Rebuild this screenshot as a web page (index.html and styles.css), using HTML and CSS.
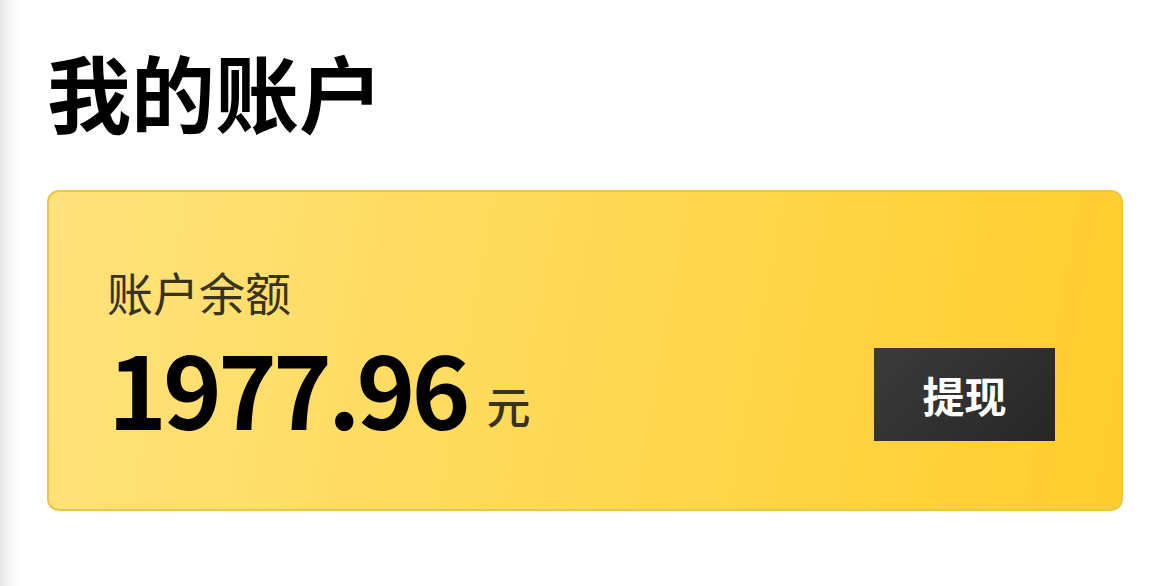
FILE: index.html
```html
<!DOCTYPE html>
<html lang="zh-CN">
<head>
<meta charset="utf-8">
<link rel="stylesheet" href="styles.css">
</head>
<body>
<main class="page">
  <h1 class="title">我的账户</h1>
  <section class="card">
    <div class="info">
      <div class="label">账户余额</div>
      <div class="amount"><span class="num">1977.96</span><span class="unit">元</span></div>
    </div>
    <button class="withdraw">提现</button>
  </section>
</main>
</body>
</html>
```
FILE: styles.css
```css
html, body {
  margin: 0;
  padding: 0;
  height: 100%;
}
body {
  background: linear-gradient(to right, #e6e6e6 0px, #f6f6f6 10px, #ffffff 22px);
  font-family: "Noto Sans CJK SC", "Noto Sans", sans-serif;
  color: #000;
}
.page {
  padding: 46px 47px 0 47px;
}
.title {
  margin: 0;
  font-size: 84px;
  line-height: 90px;
  font-weight: 700;
}
.card {
  margin-top: 54px;
  height: 321px;
  box-sizing: border-box;
  border: 2px solid #f1c445;
  border-radius: 12px;
  background: linear-gradient(100deg, #ffe27c 0%, #ffd955 50%, #ffcd2c 100%);
  display: flex;
  align-items: flex-start;
  justify-content: space-between;
  padding: 0 66px 0 58px;
}
.info {
  padding-top: 69px;
}
.label {
  font-size: 46px;
  line-height: 60px;
  color: #3a3220;
  font-weight: 400;
}
.amount {
  margin-top: 11px;
  font-size: 100px;
  line-height: 110px;
  white-space: nowrap;
}
.num {
  font-weight: 700;
  color: #000;
  letter-spacing: -4px;
  margin-left: 1px;
}
.unit {
  font-size: 44px;
  line-height: 1;
  color: #3a3220;
  margin-left: 20px;
  font-weight: 500;
  vertical-align: 6px;
}
.withdraw {
  margin-top: 156px;
  width: 181px;
  height: 93px;
  border: none;
  border-radius: 0;
  background: linear-gradient(135deg, #3b3b3b 0%, #262626 100%);
  color: #fff;
  font-family: "Noto Sans CJK SC", sans-serif;
  font-size: 42px;
  font-weight: 700;
  padding: 0;
}
```
